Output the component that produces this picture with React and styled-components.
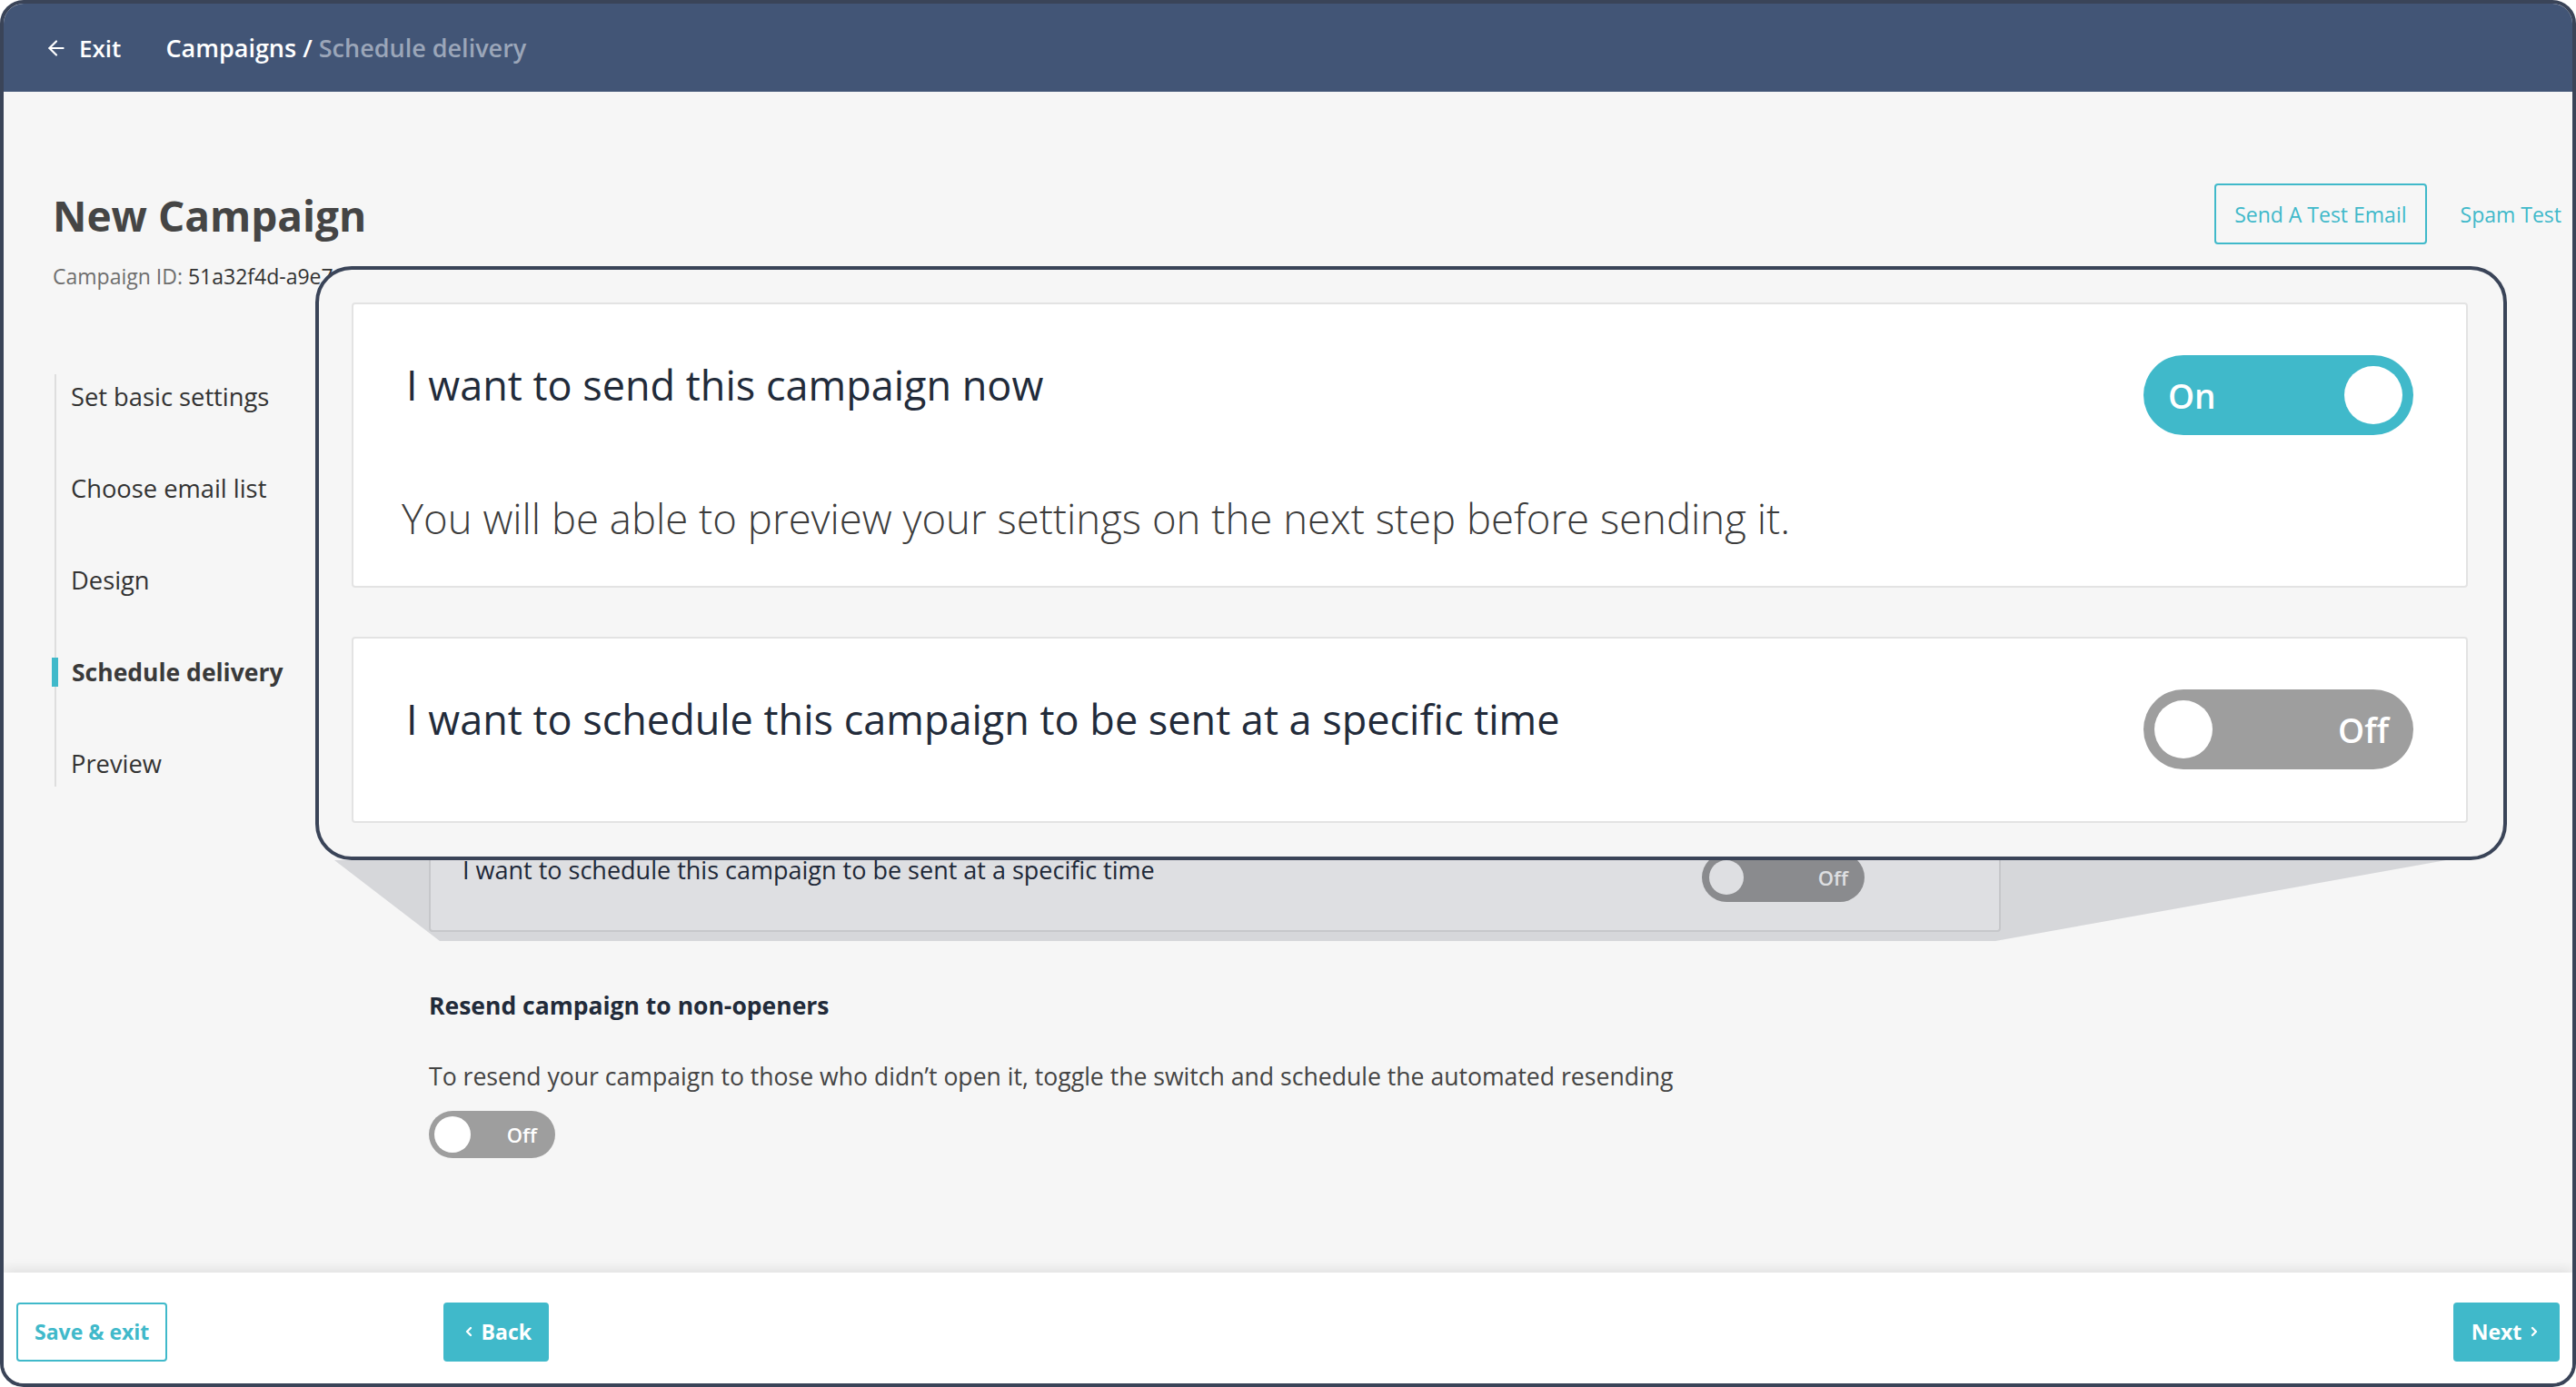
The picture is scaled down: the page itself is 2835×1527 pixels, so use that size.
import React from 'react';
import styled, { createGlobalStyle } from 'styled-components';
import { ArrowLeft, ChevronLeft, ChevronRight } from 'lucide-react';

const TEAL = '#40b9ca';
const NAVY = '#222b3a';

const GlobalStyle = createGlobalStyle`
  html, body {
    margin: 0;
    padding: 0;
    background: #fff;
  }
  body {
    font-family: "Open Sans", "Noto Sans", sans-serif;
  }
  * {
    box-sizing: border-box;
  }
`;

const Frame = styled.div`
  width: 100vw;
  height: 100vh;
  border: 4px solid #3a4458;
  border-radius: 26px;
  overflow: hidden;
  display: flex;
  flex-direction: column;
  background: #f6f6f6;
`;

const Header = styled.header`
  height: 97px;
  flex-shrink: 0;
  background: #425576;
  display: flex;
  align-items: center;
  padding: 0 45px;
  color: #fff;
  font-size: 26px;
  font-weight: 600;
`;

const ExitLink = styled.a`
  display: flex;
  align-items: center;
  gap: 12px;
  color: #fff;
  margin-right: 49px;
`;

const Crumbs = styled.div`
  color: #fff;
  font-size: 27px;
  white-space: pre;
`;

const CrumbCurrent = styled.span`
  color: #9ba6b9;
`;

const Body = styled.main`
  flex: 1;
  position: relative;
  padding: 101px 12px 0 54px;
  background: #f6f6f6;
`;

const TopRow = styled.div`
  display: flex;
  justify-content: space-between;
  align-items: flex-start;
`;

const TitleBlock = styled.div`
  margin-top: 6px;
`;

const PageTitle = styled.h1`
  margin: 0;
  font-size: 46px;
  line-height: 58px;
  font-weight: 700;
  color: #454545;
`;

const CampaignId = styled.div`
  margin-top: 23px;
  font-size: 23px;
  line-height: 30px;
  color: #6e6e6e;
  white-space: nowrap;
`;

const IdValue = styled.span`
  color: #333;
`;

const Actions = styled.div`
  display: flex;
  align-items: center;
  gap: 37px;
`;

const OutlineButton = styled.button`
  height: ${(p) => p.$h || 67}px;
  padding: 0 ${(p) => p.$px || 20}px;
  border: 2px solid ${TEAL};
  border-radius: 4px;
  background: ${(p) => (p.$white ? '#fff' : 'transparent')};
  color: ${TEAL};
  font-family: inherit;
  font-size: 23px;
  font-weight: ${(p) => p.$weight || 400};
`;

const TextLink = styled.a`
  color: ${TEAL};
  font-size: 23px;
`;

const Columns = styled.div`
  display: grid;
  grid-template-columns: 414px 1730px;
  margin-top: 93px;
`;

const Steps = styled.nav`
  align-self: start;
  justify-self: start;
  margin-left: 2px;
  border-left: 2px solid #dedede;
  display: flex;
  flex-direction: column;
  align-items: flex-start;
  gap: 51px;
`;

const Step = styled.div`
  position: relative;
  height: 50px;
  line-height: 50px;
  padding-left: ${(p) => (p.$active ? 17 : 16)}px;
  font-size: ${(p) => (p.$active ? 26.5 : 27.3)}px;
  font-weight: ${(p) => (p.$active ? 700 : 400)};
  color: ${(p) => (p.$active ? '#3a3a3a' : '#333')};
  white-space: nowrap;

  &::before {
    content: '';
    display: ${(p) => (p.$active ? 'block' : 'none')};
    position: absolute;
    left: -5px;
    top: 9px;
    width: 7px;
    height: 32px;
    background: ${TEAL};
  }
`;

const Content = styled.section`
  display: flex;
  flex-direction: column;
`;

const CardStack = styled.div`
  display: flex;
  flex-direction: column;
  gap: ${(p) => p.$gap}px;
  margin-top: ${(p) => p.$top || 0}px;
`;

const Card = styled.div`
  background: #fff;
  border: 2px solid #e3e3e3;
  border-radius: 4px;
  padding: ${(p) => p.$pad};
  visibility: ${(p) => (p.$covered ? 'hidden' : 'visible')};
`;

const CardHead = styled.div`
  display: flex;
  justify-content: space-between;
  align-items: flex-start;
`;

const CardTitle = styled.div`
  font-size: ${(p) => p.$size}px;
  line-height: ${(p) => p.$lh}px;
  color: ${NAVY};
  white-space: nowrap;
`;

const CardNote = styled.div`
  font-size: ${(p) => p.$size}px;
  line-height: ${(p) => p.$lh}px;
  margin-top: ${(p) => p.$mt}px;
  margin-left: ${(p) => p.$ml || 0}px;
  font-weight: 300;
  color: #3c3c3c;
  white-space: nowrap;
`;

const Track = styled.div`
  flex-shrink: 0;
  display: flex;
  flex-direction: ${(p) => (p.$on ? 'row' : 'row-reverse')};
  justify-content: space-between;
  align-items: center;
  width: ${(p) => p.$w}px;
  height: ${(p) => p.$h}px;
  border-radius: ${(p) => p.$h / 2}px;
  padding: 0 ${(p) => p.$inset}px;
  margin-top: ${(p) => p.$mt || 0}px;
  background: ${(p) => (p.$on ? TEAL : '#9e9e9e')};
`;

const Knob = styled.span`
  width: ${(p) => p.$d}px;
  height: ${(p) => p.$d}px;
  border-radius: 50%;
  background: #fff;
`;

const TrackLabel = styled.span`
  color: #fff;
  font-weight: 600;
  font-size: ${(p) => p.$size}px;
  margin: 0 ${(p) => p.$gap}px;
`;

const Resend = styled.div`
  margin-top: 63px;
`;

const ResendTitle = styled.div`
  font-size: 26.5px;
  line-height: 36px;
  font-weight: 700;
  color: ${NAVY};
`;

const ResendText = styled.div`
  margin-top: 42px;
  font-size: 26.6px;
  line-height: 36px;
  color: #444;
  white-space: nowrap;
`;

const ResendSwitch = styled.div`
  margin-top: 20px;
`;

const Shade = styled.svg`
  position: absolute;
  left: 0;
  top: 0;
  width: 100%;
  height: 100%;
  pointer-events: none;
  z-index: 1;
`;

const Callout = styled.div`
  position: absolute;
  left: 343px;
  top: 192px;
  width: 2412px;
  height: 654px;
  z-index: 2;
  border: 4px solid #3a4458;
  border-radius: 40px;
  background: #f6f6f6;
  padding: 36px 39px 39px 36px;
`;

const Footer = styled.footer`
  position: relative;
  z-index: 3;
  height: 122px;
  flex-shrink: 0;
  background: #fff;
  box-shadow: 0 -4px 12px rgba(0, 0, 0, 0.09);
  display: flex;
  align-items: center;
  padding: 8px 14px 0;
`;

const FillButton = styled.button`
  display: flex;
  align-items: center;
  justify-content: center;
  gap: 6px;
  height: 65px;
  width: ${(p) => p.$w}px;
  margin-left: ${(p) => p.$ml};
  border: none;
  border-radius: 4px;
  background: ${TEAL};
  color: #fff;
  font-family: inherit;
  font-size: 23px;
  font-weight: 700;
`;

function Toggle({ on, w, h, d, inset, size, gap, mt }) {
  return (
    <Track $on={on} $w={w} $h={h} $inset={inset} $mt={mt}>
      <TrackLabel $size={size} $gap={gap}>{on ? 'On' : 'Off'}</TrackLabel>
      <Knob $d={d} />
    </Track>
  );
}

const small = {
  big: false,
  pad: '35px 148px 30px 35px',
  pad2: '35px 148px 31px 35px',
  title: 27,
  lh: 38,
  note: 27,
  noteLh: 34,
  noteMt: 38,
  toggle: { w: 179, h: 54, d: 38, inset: 8, size: 22, gap: 10 },
};

const big = {
  big: true,
  pad: '58px 58px 47px 58px',
  pad2: '58px 58px 57px 58px',
  title: 45,
  lh: 62,
  note: 45.5,
  noteLh: 56,
  noteMt: 63,
  toggle: { w: 297, h: 88, d: 64, inset: 12, size: 37, gap: 15, mt: -2 },
};

// the page copy sits under the magnifier: its first card is fully covered
function DeliveryCards({ v, top, gap }) {
  return (
    <CardStack $gap={gap} $top={top}>
      <Card $pad={v.pad} $covered={!v.big}>
        <CardHead>
          <CardTitle $size={v.title} $lh={v.lh}>I want to send this campaign now</CardTitle>
          <Toggle on {...v.toggle} />
        </CardHead>
        <CardNote $size={v.note} $lh={v.noteLh} $mt={v.noteMt} $ml={v.big ? -5 : 0}>
          You will be able to preview your settings on the next step before sending it.
        </CardNote>
      </Card>
      <Card $pad={v.pad2}>
        <CardHead>
          <CardTitle $size={v.title} $lh={v.lh}>
            I want to schedule this campaign to be sent at a specific time
          </CardTitle>
          <Toggle on={false} {...v.toggle} />
        </CardHead>
      </Card>
    </CardStack>
  );
}

const steps = ['Set basic settings', 'Choose email list', 'Design', 'Schedule delivery', 'Preview'];

export default function App() {
  return (
    <>
      <GlobalStyle />
      <Frame>
        <Header>
          <ExitLink>
            <ArrowLeft size={26} strokeWidth={2} />
            Exit
          </ExitLink>
          <Crumbs>
            Campaigns / <CrumbCurrent>Schedule delivery</CrumbCurrent>
          </Crumbs>
        </Header>

        <Body>
          <TopRow>
            <TitleBlock>
              <PageTitle>New Campaign</PageTitle>
              <CampaignId>
                Campaign ID: <IdValue>51a32f4d-a9e7-4c1b-8f2e-6d3a9b0c5e21</IdValue>
              </CampaignId>
            </TitleBlock>
            <Actions>
              <OutlineButton>Send A Test Email</OutlineButton>
              <TextLink>Spam Test</TextLink>
            </Actions>
          </TopRow>

          <Columns>
            <Steps>
              {steps.map((s) => (
                <Step key={s} $active={s === 'Schedule delivery'}>{s}</Step>
              ))}
            </Steps>
            <Content>
              <DeliveryCards v={small} top={262} gap={33} />
              <Resend>
                <ResendTitle>Resend campaign to non-openers</ResendTitle>
                <ResendText>
                  To resend your campaign to those who didn’t open it, toggle the switch and schedule the automated resending
                </ResendText>
                <ResendSwitch>
                  <Toggle on={false} w={139} h={52} d={40} inset={6} size={22} gap={14} />
                </ResendSwitch>
              </Resend>
            </Content>
          </Columns>

          <Shade>
            <polygon points="364,846 2688,846 2192,935 480,935" fill="rgba(20, 30, 50, 0.14)" />
          </Shade>

          <Callout>
            <DeliveryCards v={big} gap={54} />
          </Callout>
        </Body>

        <Footer>
          <OutlineButton $white $h={65} $px={18} $weight={700}>Save &amp; exit</OutlineButton>
          <FillButton $w={116} $ml="304px">
            <ChevronLeft size={16} strokeWidth={3.5} />
            Back
          </FillButton>
          <FillButton $w={117} $ml="auto">
            Next
            <ChevronRight size={16} strokeWidth={3.5} />
          </FillButton>
        </Footer>
      </Frame>
    </>
  );
}
